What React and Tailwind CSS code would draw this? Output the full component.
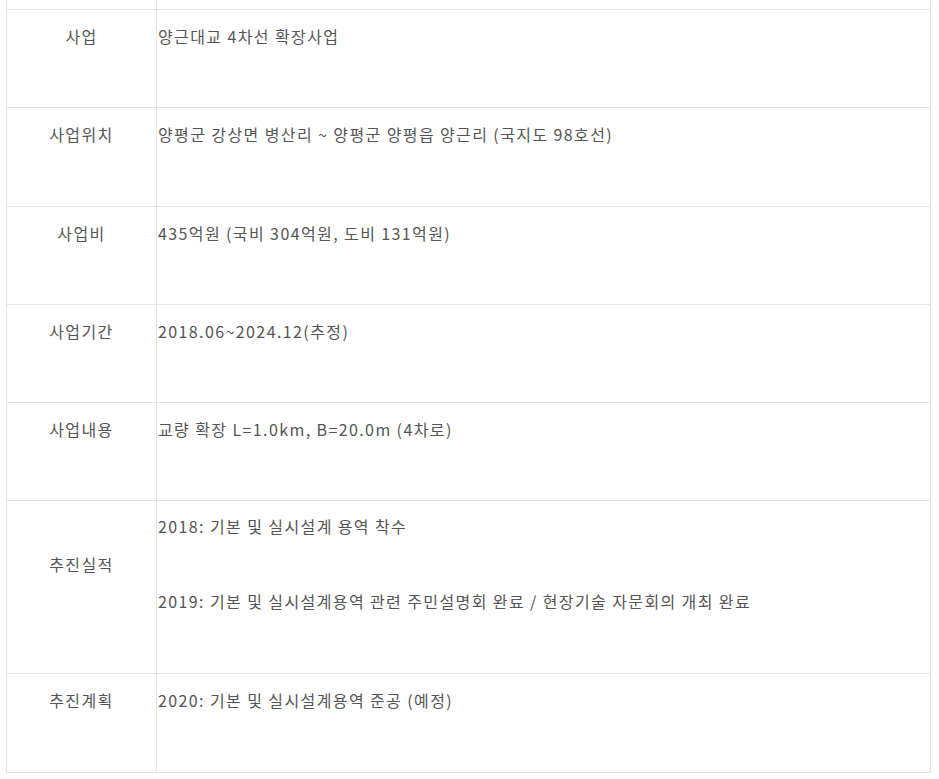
export default function App() {
  const rows = [
    { label: "사업", h: "h-[98px]", content: ["양근대교 4차선 확장사업"] },
    { label: "사업위치", h: "h-[99px]", content: ["양평군 강상면 병산리 ~ 양평군 양평읍 양근리 (국지도 98호선)"] },
    { label: "사업비", h: "h-[98px]", content: ["435억원 (국비 304억원, 도비 131억원)"] },
    { label: "사업기간", h: "h-[98px]", content: ["2018.06~2024.12(추정)"] },
    { label: "사업내용", h: "h-[98px]", content: ["교량 확장 L=1.0km, B=20.0m (4차로)"] },
  ];
  const font = { fontFamily: '"Malgun Gothic", "Noto Sans CJK KR", "Noto Sans", sans-serif' };
  return (
    <div className="w-[939px] h-[779px] bg-white overflow-hidden" style={font}>
      <div className="ml-[6px] w-[925px] border-l border-r border-[#e3e3e3] text-[16px] tracking-[1.4px] text-[#555555] leading-[22px]">
        <div className="flex h-[10px] border-b border-[#e3e3e3]">
          <div className="w-[150px] border-r border-[#e3e3e3]"></div>
          <div className="flex-1"></div>
        </div>
        {rows.map((r) => (
          <div key={r.label} className={`flex ${r.h} border-b border-[#e3e3e3]`}>
            <div className="w-[150px] shrink-0 border-r border-[#e3e3e3] pt-[15px] text-center">{r.label}</div>
            <div className="flex-1 pt-[15px] pl-[1px]">{r.content[0]}</div>
          </div>
        ))}
        <div className="flex h-[173px] border-b border-[#e3e3e3]">
          <div className="w-[150px] shrink-0 border-r border-[#e3e3e3] pt-[52px] text-center">추진실적</div>
          <div className="flex-1 pt-[14px] pl-[1px]">
            <p>2018: 기본 및 실시설계 용역 착수</p>
            <p className="mt-[53px]">2019: 기본 및 실시설계용역 관련 주민설명회 완료 / 현장기술 자문회의 개최 완료</p>
          </div>
        </div>
        <div className="flex h-[99px] border-b border-[#e3e3e3]">
          <div className="w-[150px] shrink-0 border-r border-[#e3e3e3] pt-[15px] text-center">추진계획</div>
          <div className="flex-1 pt-[15px] pl-[1px]">2020: 기본 및 실시설계용역 준공 (예정)</div>
        </div>
      </div>
    </div>
  );
}
